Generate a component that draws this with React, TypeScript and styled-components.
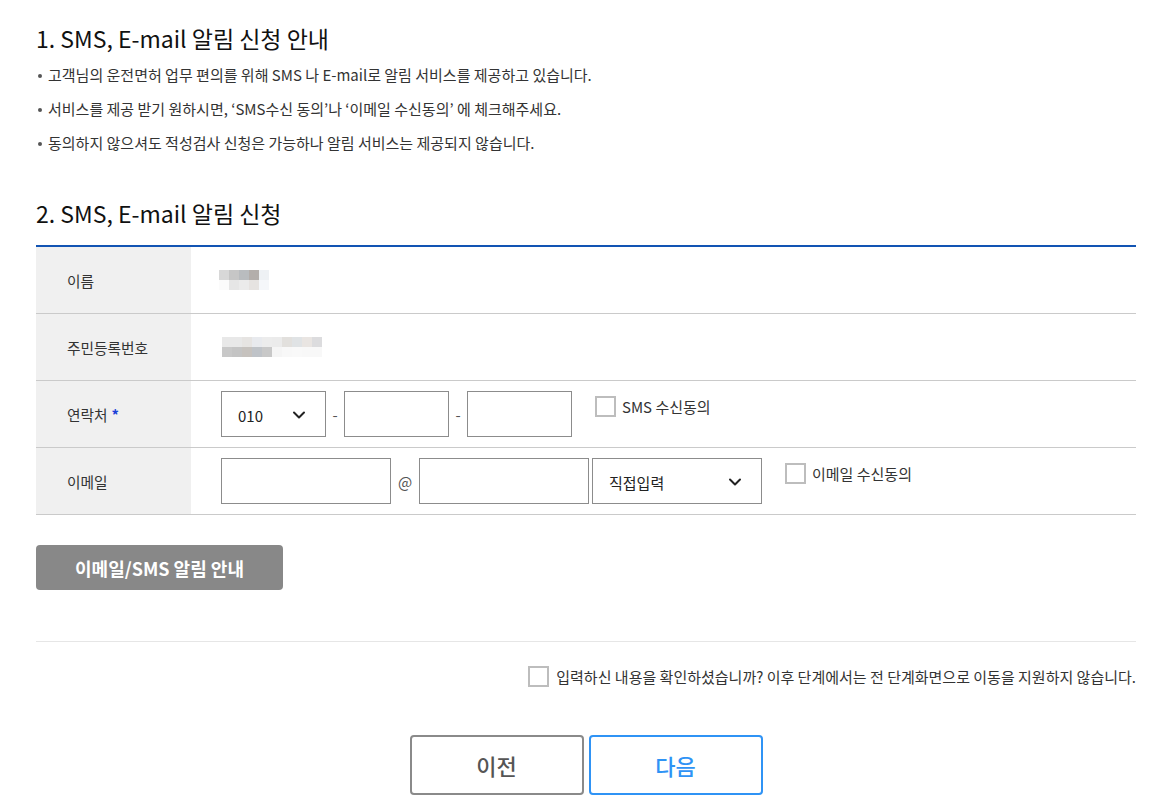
import React from 'react';
import styled, { createGlobalStyle } from 'styled-components';
import { ChevronDown } from 'lucide-react';

const GlobalStyle = createGlobalStyle`
	* {
		box-sizing: border-box;
	}
	body {
		margin: 0;
		background: #fff;
		font-family: 'Noto Sans CJK KR', 'Noto Sans', sans-serif;
		color: #333;
	}
`;

const Page = styled.div`
	width: 1100px;
	margin-left: 36px;
	padding-top: 22px;
	padding-bottom: 14px;
`;

const Title = styled.h2<{ $top?: number }>`
	margin: ${p => p.$top || 0}px 0 0;
	font-size: 23px;
	line-height: 33px;
	font-weight: 400;
	color: #111;
`;

const Guide = styled.ul`
	list-style: none;
	margin: 10px 0 0;
	padding: 0;
	display: flex;
	flex-direction: column;
	gap: 14px;
	li {
		position: relative;
		padding-left: 12px;
		font-size: 15px;
		line-height: 20px;
		color: #333;
		&:before {
			content: '';
			position: absolute;
			left: 2px;
			top: 9px;
			width: 4px;
			height: 4px;
			border-radius: 50%;
			background: #555;
		}
	}
`;

const Table = styled.div`
	margin-top: 15px;
	border-top: 2px solid #1254b3;
`;

const Row = styled.div`
	display: grid;
	grid-template-columns: 155px 1fr;
	min-height: 67px;
	border-bottom: 1px solid #cacaca;
`;

const Label = styled.div`
	background: #f0f0f0;
	display: flex;
	align-items: center;
	padding-left: 31px;
	font-size: 14.7px;
	color: #333;
	em {
		font-style: normal;
		color: #1a3fd8;
		margin-left: 4px;
		font-weight: 700;
	}
`;

const Value = styled.div<{ $center?: boolean }>`
	display: flex;
	align-items: ${p => (p.$center ? 'center' : 'flex-start')};
	padding: ${p => (p.$center ? '0' : '10px')} 0 0 30px;
`;

const Mosaic = styled.div<{ $cols: number }>`
	display: grid;
	grid-template-columns: repeat(${p => p.$cols}, 10px);
	grid-auto-rows: 10px;
`;

const Field = styled.input<{ $w: number }>`
	width: ${p => p.$w}px;
	height: 46px;
	border: 1px solid #8c8c8c;
	border-radius: 0;
	padding: 0 12px;
	font-size: 15px;
	outline: none;
`;

const SelectBox = styled.div<{ $w: number }>`
	width: ${p => p.$w}px;
	height: 46px;
	border: 1px solid #8c8c8c;
	display: flex;
	align-items: center;
	justify-content: space-between;
	padding: 2px 16px 0 16px;
	font-size: 15px;
	color: #222;
	svg {
		color: #222;
	}
`;

const Sep = styled.span<{ $w: number }>`
	width: ${p => p.$w}px;
	height: 46px;
	display: flex;
	align-items: center;
	justify-content: center;
	font-size: 15px;
	color: #555;
`;

const Agree = styled.label<{ $ml: number }>`
	display: flex;
	align-items: center;
	gap: 6px;
	margin-left: ${p => p.$ml}px;
	margin-top: 5px;
	font-size: 15px;
	color: #333;
	line-height: 20px;
`;

const Box = styled.span<{ $size?: number }>`
	display: inline-block;
	width: ${p => p.$size || 21}px;
	height: ${p => p.$size || 21}px;
	border: 2px solid #bdbdbd;
	background: #fff;
	flex-shrink: 0;
`;

const GuideButton = styled.button`
	display: block;
	margin-top: 30px;
	width: 247px;
	height: 45px;
	border: none;
	border-radius: 4px;
	background: #888;
	color: #fff;
	font-family: inherit;
	font-size: 18px;
	font-weight: 700;
`;

const Divider = styled.hr`
	margin: 51px 0 0;
	border: none;
	border-top: 1px solid #e6e6e6;
`;

const Confirm = styled.label`
	display: flex;
	justify-content: flex-end;
	align-items: center;
	gap: 7px;
	margin-top: 24px;
	font-size: 15px;
	color: #333;
`;

const Actions = styled.div`
	display: flex;
	justify-content: center;
	gap: 5px;
	margin-top: 48px;
`;

const NavButton = styled.button<{ $primary?: boolean }>`
	width: 174px;
	height: 60px;
	border-radius: 4px;
	background: #fff;
	border: 2px solid ${p => (p.$primary ? '#2f93f5' : '#8a8a8a')};
	color: ${p => (p.$primary ? '#2f93f5' : '#555')};
	font-family: inherit;
	font-size: 22px;
	font-weight: 500;
`;

const nameBlur = [
	['#d8d8d8', '#c6c6c6', '#b9bcbf', '#b3aeab', '#eef1f4'],
	['#fbfbfb', '#e6e6e6', '#ebebeb', '#e6e3e1', '#f5f7fa'],
];

const idBlur = [
	['#e8e8e8', '#e8e8e8', '#e6e4e2', '#e8eaee', '#ececec', '#ebebeb', '#e2e0dd', '#e0e3e5', '#e9e5e2', '#dcdcde'],
	['#c8c8c8', '#c4c4c4', '#c6c2be', '#bfc3c8', '#c8c8c8', '#f5f5f5', '#f8f8f8', '#f9f9f9', '#f8f8f8', '#f8f8f8'],
];

const Blur = ({ cells, offset }: { cells: string[][]; offset: number }) => (
	<Mosaic $cols={cells[0].length} style={{ marginLeft: offset }}>
		{cells.flat().map((c, i) => (
			<div key={i} style={{ background: c }} />
		))}
	</Mosaic>
);

export default function App() {
	return (
		<Page>
			<GlobalStyle />
			<Title>1. SMS, E-mail 알림 신청 안내</Title>
			<Guide>
				<li>고객님의 운전면허 업무 편의를 위해 SMS 나 E-mail로 알림 서비스를 제공하고 있습니다.</li>
				<li>서비스를 제공 받기 원하시면, ‘SMS수신 동의’나 ‘이메일 수신동의’ 에 체크해주세요.</li>
				<li>동의하지 않으셔도 적성검사 신청은 가능하나 알림 서비스는 제공되지 않습니다.</li>
			</Guide>

			<Title $top={44}>2. SMS, E-mail 알림 신청</Title>
			<Table>
				<Row>
					<Label>이름</Label>
					<Value $center>
						<Blur cells={nameBlur} offset={-2} />
					</Value>
				</Row>
				<Row>
					<Label>주민등록번호</Label>
					<Value $center>
						<Blur cells={idBlur} offset={1} />
					</Value>
				</Row>
				<Row>
					<Label>
						연락처<em>*</em>
					</Label>
					<Value>
						<SelectBox $w={105}>
							010
							<ChevronDown size={20} strokeWidth={2.4} />
						</SelectBox>
						<Sep $w={18}>-</Sep>
						<Field $w={105} />
						<Sep $w={18}>-</Sep>
						<Field $w={105} />
						<Agree $ml={23}>
							<Box />
							SMS 수신동의
						</Agree>
					</Value>
				</Row>
				<Row>
					<Label>이메일</Label>
					<Value>
						<Field $w={170} />
						<Sep $w={28}>@</Sep>
						<Field $w={170} />
						<SelectBox $w={170} style={{ marginLeft: 3 }}>
							직접입력
							<ChevronDown size={20} strokeWidth={2.4} />
						</SelectBox>
						<Agree $ml={23}>
							<Box />
							이메일 수신동의
						</Agree>
					</Value>
				</Row>
			</Table>

			<GuideButton>이메일/SMS 알림 안내</GuideButton>
			<Divider />
			<Confirm>
				<Box />
				입력하신 내용을 확인하셨습니까? 이후 단계에서는 전 단계화면으로 이동을 지원하지 않습니다.
			</Confirm>
			<Actions>
				<NavButton>이전</NavButton>
				<NavButton $primary>다음</NavButton>
			</Actions>
		</Page>
	);
}
